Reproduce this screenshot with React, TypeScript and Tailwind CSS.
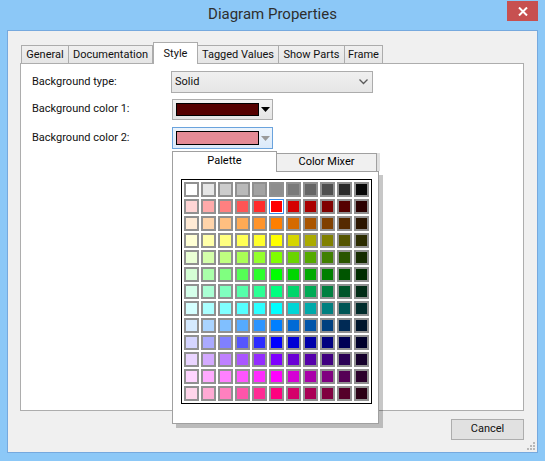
import React from 'react';

const GRAYS = [255, 230, 204, 185, 163, 142, 122, 102, 79, 42, 8];

const HUES: [number, number, number][] = [
  [255, 0, 0],
  [255, 127, 0],
  [255, 255, 0],
  [127, 255, 0],
  [0, 255, 0],
  [0, 255, 127],
  [0, 255, 255],
  [0, 127, 255],
  [0, 0, 255],
  [127, 0, 255],
  [255, 0, 255],
  [255, 0, 127],
];

function cellColor(row: number, col: number): string {
  if (row === 0) {
    const g = GRAYS[col];
    return `rgb(${g},${g},${g})`;
  }
  const base = HUES[row - 1];
  const c = base.map((v) => {
    if (col <= 5) return Math.round(v + ((255 - v) * (5 - col)) / 6);
    return Math.round((v * (11 - col)) / 6);
  });
  return `rgb(${c[0]},${c[1]},${c[2]})`;
}

const TABS = [
  { label: 'General', w: 'w-[48px]' },
  { label: 'Documentation', w: 'w-[85px]' },
  { label: 'Style', w: 'w-[45px]', active: true },
  { label: 'Tagged Values', w: 'w-[82px]' },
  { label: 'Show Parts', w: 'w-[67px]' },
  { label: 'Frame', w: 'w-[39px]' },
];

function DownTriangle({ color }: { color: string }) {
  return (
    <svg width="9" height="5" viewBox="0 0 9 5">
      <polygon points="0,0 9,0 4.5,5" fill={color} />
    </svg>
  );
}

function ColorCombo({ swatch, focused }: { swatch: string; focused?: boolean }) {
  return (
    <div
      className={
        focused
          ? 'flex items-center w-[101px] h-[22px] border border-[#6aa3dd] bg-gradient-to-b from-[#ecf4fc] to-[#dbeafa] pl-[3px]'
          : 'flex items-center w-[101px] h-[21px] border border-[#adadad] bg-gradient-to-b from-[#f2f2f2] to-[#e5e5e5] pl-[3px]'
      }
    >
      <div
        className={focused ? 'w-[83px] h-[14px] border border-black' : 'w-[83px] h-[13px] border border-black'}
        style={{ backgroundColor: swatch }}
      />
      <div className="flex-1 flex justify-center">
        <DownTriangle color={focused ? '#9a9a9a' : '#000000'} />
      </div>
    </div>
  );
}

function Palette() {
  const rows = Array.from({ length: 13 }, (_, r) => r);
  const cols = Array.from({ length: 11 }, (_, c) => c);
  return (
    <div className="absolute left-[172px] top-[150px] w-[211px] h-[278px]">
      <div className="flex items-end h-[21px]">
        <div className="relative z-10 w-[105px] h-[21px] -mb-px bg-white border border-b-0 border-[#a0a0a0] flex items-center justify-center pb-[2px] text-[11px] text-black">
          Palette
        </div>
        <div className="w-[100px] h-[18px] bg-[#f0f0f0] border border-b-0 border-l-0 border-[#a0a0a0] flex items-center justify-center text-[11px] text-black shadow-[3px_0_0_rgba(0,0,0,0.12)]">
          Color Mixer
        </div>
      </div>
      <div className="w-[207px] h-[253px] bg-white border border-[#a0a0a0] shadow-[4px_4px_0_rgba(0,0,0,0.22)] pl-[8px] pt-[7px]">
        <div className="w-[191px] border border-black p-[2px]">
          <div className="grid grid-cols-[repeat(11,15px)] gap-[2px]">
            {rows.map((r) =>
              cols.map((c) => {
                const selected = r === 1 && c === 5;
                return (
                  <div
                    key={`${r}-${c}`}
                    className={
                      selected
                        ? 'w-[15px] h-[15px] border border-[#3c8fe8] shadow-[inset_0_0_0_1px_white]'
                        : 'w-[15px] h-[15px] border-2 border-[#919191]'
                    }
                    style={{ backgroundColor: cellColor(r, c) }}
                  />
                );
              })
            )}
          </div>
        </div>
      </div>
    </div>
  );
}

export default function App() {
  return (
    <div className="relative w-[545px] h-[461px] bg-[#8cc8f7] overflow-hidden font-['Segoe_UI',Roboto,'Liberation_Sans',sans-serif] text-[#111111]">
      {/* Title bar */}
      <div className="relative h-[30px] flex items-center justify-center">
        <span className="text-[15px] text-[#2e2e2e] -mt-[1px]">Diagram Properties</span>
        <div className="absolute right-[7px] top-[1px] w-[31px] h-[20px] bg-[#c75050] flex items-center justify-center">
          <svg width="10" height="9" viewBox="0 0 10 9">
            <path d="M1 0.5 L9 8.5 M9 0.5 L1 8.5" stroke="white" strokeWidth="2" />
          </svg>
        </div>
      </div>

      {/* Client area */}
      <div className="relative ml-[7px] w-[531px] h-[423px] border border-[#76a9de] bg-[#f0f0f0]">
        {/* Tabs */}
        <div className="flex items-end h-[21px] mt-[11px] ml-[13px]">
          {TABS.map((t) =>
            t.active ? (
              <div
                key={t.label}
                className={`relative z-10 ${t.w} h-[22px] -mb-px bg-white border border-b-0 border-[#acacac] flex items-start justify-center pt-[3px] text-[11px]`}
              >
                {t.label}
              </div>
            ) : (
              <div
                key={t.label}
                className={`${t.w} h-[18px] -ml-px first:ml-0 bg-gradient-to-b from-[#f0f0f0] to-[#e5e5e5] border border-b-0 border-[#acacac] flex items-center justify-center pt-[1px] text-[11px]`}
              >
                {t.label}
              </div>
            )
          )}
        </div>

        {/* Panel */}
        <div className="ml-[12px] w-[504px] h-[348px] bg-white border border-[#adadad] pl-[11px] pt-[7px] text-[11px]">
          <div className="flex items-center h-[22px]">
            <div className="w-[139px]">Background type:</div>
            <div className="flex items-center justify-between w-[202px] h-[22px] border border-[#acacac] bg-gradient-to-b from-[#f0f0f0] to-[#e6e6e6] pl-[3px] pr-[4px]">
              <span>Solid</span>
              <svg width="9" height="6" viewBox="0 0 9 6">
                <polyline points="0.5,0.5 4.5,4.5 8.5,0.5" fill="none" stroke="#5a5a5a" strokeWidth="1.3" />
              </svg>
            </div>
          </div>
          <div className="flex items-center h-[21px] mt-[6px]">
            <div className="w-[140px]">Background color 1:</div>
            <ColorCombo swatch="#550000" />
          </div>
          <div className="flex items-center h-[22px] mt-[7px]">
            <div className="w-[140px]">Background color 2:</div>
            <ColorCombo swatch="#e48b96" focused />
          </div>
        </div>

        {/* Footer */}
        <div className="ml-[12px] w-[504px] flex justify-end mt-[8px]">
          <div className="w-[73px] h-[21px] border border-[#adadad] bg-[#e1e1e1] flex items-center justify-center text-[11px]">
            Cancel
          </div>
        </div>

        {/* Resize grip */}
        <svg className="absolute right-[2px] bottom-[2px]" width="8" height="8" viewBox="0 0 8 8">
          <rect x="6" y="0" width="2" height="2" fill="#b8b8b8" />
          <rect x="3" y="3" width="2" height="2" fill="#b8b8b8" />
          <rect x="6" y="3" width="2" height="2" fill="#b8b8b8" />
          <rect x="0" y="6" width="2" height="2" fill="#b8b8b8" />
          <rect x="3" y="6" width="2" height="2" fill="#b8b8b8" />
          <rect x="6" y="6" width="2" height="2" fill="#b8b8b8" />
        </svg>
      </div>

      <Palette />
    </div>
  );
}
